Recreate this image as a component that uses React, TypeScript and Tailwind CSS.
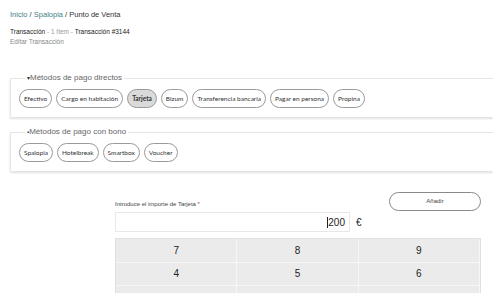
const directos = ["Efectivo", "Cargo en habitación", "Tarjeta", "Bizum", "Transferencia bancaria", "Pagar en persona", "Propina"];
const bonos = ["Spalopia", "Hotelbreak", "Smartbox", "Voucher"];
// third row falls below the fold
const keys = ["7", "8", "9", "4", "5", "6", "", "", ""];

const Pill = ({ label, active }: { label: string; active?: boolean }) => (
  <button
    className={`h-[19px] px-[4px] rounded-full border border-[#9a9a9a] text-[6.5px] text-[#333] font-['Lato',sans-serif] whitespace-nowrap ${
      active ? "bg-[#dadada] font-bold" : "bg-white"
    }`}
  >
    {label}
  </button>
);

const Group = ({ title, items, marker }: { title: string; items: string[]; marker: string }) => (
  <fieldset className="ml-[10px] border-l border-t border-[#e6e6e6] shadow-[0_2px_2px_rgba(0,0,0,0.12)] pb-[9px] pl-[8px] pt-[2px] min-w-0">
    <legend className="ml-[6px] px-[2px] text-[8px] text-[#666] font-['Liberation_Sans',sans-serif] leading-none">
      <span className="text-[6px] text-[#333]">{marker}</span>
      {title}
    </legend>
    <div className="flex gap-[4px] mt-[5px]">
      {items.map((it) => (
        <Pill key={it} label={it} active={it === "Tarjeta"} />
      ))}
    </div>
  </fieldset>
);

export default function App() {
  return (
    <div className="w-[493px] h-[293px] overflow-hidden bg-white font-['Liberation_Sans',sans-serif]">
      <div className="pl-[10px] pt-[10px] text-[7.5px] text-[#333] leading-[10px]">
        <span className="text-[#3f7f88]">Inicio</span> / <span className="text-[#3f7f88]">Spalopia</span> / Punto de Venta
      </div>
      <div className="pl-[10px] pt-[7px] text-[6.5px] leading-[10px]">
        <div className="text-[#222]">
          Transacción <span className="text-[#999]">- 1 Item -</span> Transacción #3144
        </div>
        <div className="text-[#888]">Editar Transacción</div>
      </div>
      <div className="mt-[27px] flex flex-col gap-[11px]">
        <Group title="Métodos de pago directos" items={directos} marker="▾" />
        <Group title="Métodos de pago con bono" items={bonos} marker="▪" />
      </div>
      <div className="ml-[115px] w-[366px] mt-[21px]">
        <div className="flex items-end justify-between">
          <div className="text-[6px] text-[#444] pb-[3px]">
            Introduce el importe de Tarjeta <span className="text-[#c33]">*</span>
          </div>
          <button className="w-[92px] h-[19px] rounded-full border border-[#8a8a8a] text-[6px] text-[#444] mb-[1px]">
            Añadir
          </button>
        </div>
        <div className="flex items-center gap-[6px]">
          <div className="w-[235px] h-[20px] border border-[#e8e8e8] flex items-center justify-end pr-[4px] text-[10px] text-[#222]">
            <span className="border-l border-[#222] leading-[11px]">200</span>
          </div>
          <span className="text-[10px] text-[#222]">€</span>
        </div>
        <div className="mt-[6px] grid grid-cols-3 bg-[#ebebeb] border border-[#e0e0e0]">
          {keys.map((k, i) => (
            <div key={i} className="h-[23.5px] flex items-center justify-center text-[10px] text-[#222] border-r border-b border-[#f6f6f6]">
              {k}
            </div>
          ))}
        </div>
      </div>
    </div>
  );
}
